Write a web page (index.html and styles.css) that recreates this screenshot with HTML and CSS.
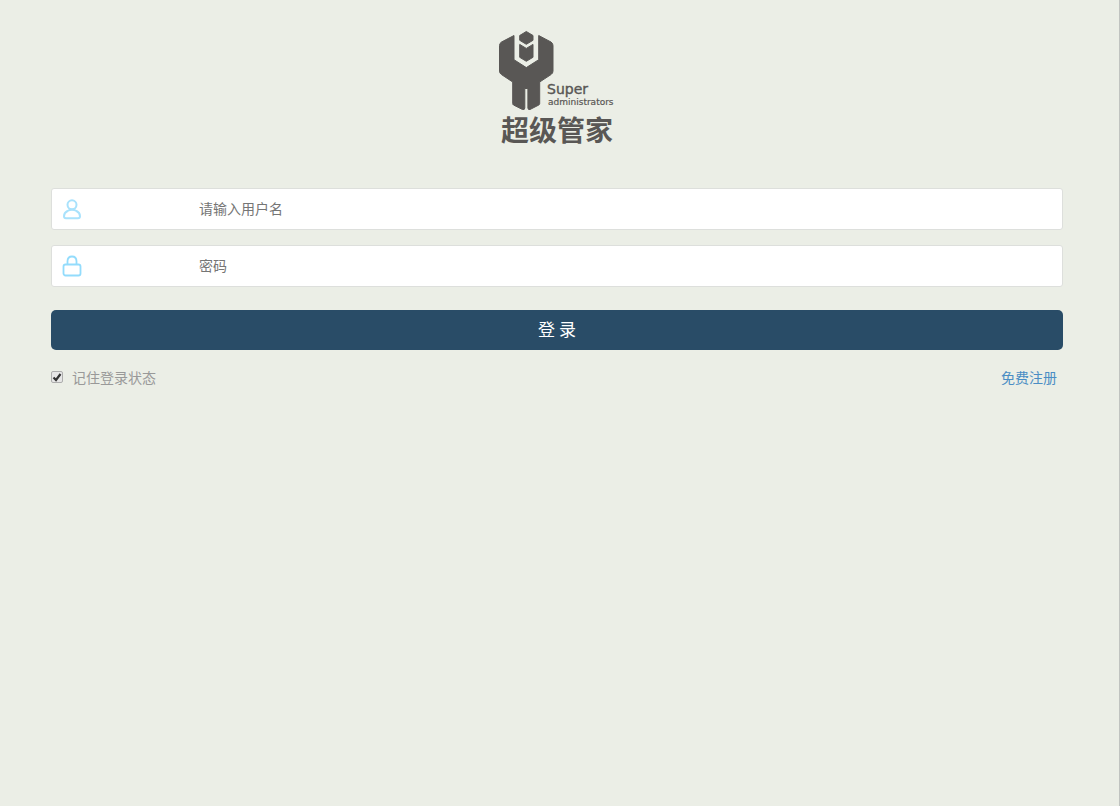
FILE: index.html
```html
<!DOCTYPE html>
<html lang="zh-CN">
<head>
  <meta charset="UTF-8">
  <meta name="viewport" content="width=device-width, initial-scale=1.0">
  <title>超级管家</title>
  <link rel="stylesheet" href="styles.css">
</head>
<body>
  <div class="page">
    <div class="logo">
      <svg width="120" height="120" viewBox="0 0 120 120" role="img" aria-label="超级管家">
        <g fill="#595755" stroke="#595755" stroke-width="1" stroke-linejoin="round">
          <path d="M17 7.5 L4.500 14 Q2.500 15.200 2.500 17.500 V43 Q2.500 45.300 4.500 46.600 L15.700 54 V75.500 Q15.700 76.500 16.500 77 L25.500 81.500 Q27.800 82 27.800 80 V60.500 H30.900 V80 Q31 82 33 81.500 L41.800 77 Q42.700 76.500 42.700 75.500 V54 L54 46.600 Q56 45.300 56 43 V17.500 Q56 15.200 54 14 L41.700 7.500 V31.700 L29.300 39.600 L17 31.700 Z"/>
          <path d="M29.300 3.500 L36 7.500 V12.300 L29.300 16.300 L22.700 12.300 V7.500 Z"/>
          <path d="M22.700 16.400 L29.300 20.400 L36 16.400 V29.300 L29.300 33.300 L22.700 29.300 Z"/>
        </g>
        <text class="logo-super" x="50" y="66">Super</text>
        <text class="logo-admin" x="51" y="77">administrators</text>
        <text class="logo-name" x="4" y="113">超级管家</text>
      </svg>
    </div>

    <form class="login-form">
      <div class="field">
        <label for="username" aria-label="用户名">
          <svg width="20" height="22" viewBox="0 0 20 22" fill="none" stroke="#a9e2fc" stroke-width="2">
            <circle cx="10" cy="6.800" r="4.500"/>
            <path d="M5.500 13 Q2 14.800 2 18.300 Q2 20.300 4 20.300 H16 Q18 20.300 18 18.300 Q18 14.800 14.500 13 Q12.500 11.800 10 11.800 Q7.500 11.800 5.500 13 Z"/>
          </svg>
        </label>
        <input type="text" id="username" placeholder="请输入用户名">
      </div>
      <div class="field">
        <label for="password" aria-label="密码">
          <svg width="20" height="22" viewBox="0 0 20 22" fill="none" stroke="#93dcfc" stroke-width="1.800">
            <path d="M5.500 9.500 V6.200 Q5.500 1.500 10 1.500 Q14.500 1.500 14.500 6.200 V9.500"/>
            <rect x="1.500" y="9.500" width="17" height="11" rx="2"/>
          </svg>
        </label>
        <input type="password" id="password" placeholder="密码">
      </div>
      <button type="submit" class="btn-login">登 录</button>
      <div class="options">
        <label class="remember">
          <input type="checkbox" checked>
          <span>记住登录状态</span>
        </label>
        <a href="#" class="register">免费注册</a>
      </div>
    </form>
  </div>
</body>
</html>
```
FILE: styles.css
```css
* {
  box-sizing: border-box;
}
body {
  margin: 0;
  font-family: "Noto Sans CJK SC", sans-serif;
  font-size: 14px;
  line-height: 20px;
  background: #ebeee6;
}
.page {
  min-height: 100vh;
  padding: 28px 56px 28px 51px;
  border-right: 1px solid #c0c3c0;
}
.logo {
  display: flex;
  justify-content: center;
  margin-bottom: 40px;
}
.logo text {
  fill: #595755;
}
.logo-super {
  font-family: "DejaVu Sans", sans-serif;
  font-size: 14px;
  stroke: #595755;
  stroke-width: 0.4px;
}
.logo-admin {
  font-family: "DejaVu Sans", sans-serif;
  font-size: 9px;
  stroke: #595755;
  stroke-width: 0.2px;
}
.logo-name {
  font-family: "Noto Sans CJK SC", sans-serif;
  font-size: 28px;
  font-weight: 700;
}
.field {
  display: flex;
  align-items: center;
  height: 42px;
  margin-bottom: 15px;
  background: #fff;
  border: 1px solid #dddfdc;
  border-radius: 3px;
}
.field label {
  display: flex;
  flex: none;
  width: 147px;
  padding-left: 10px;
}
.field input {
  flex: 1;
  min-width: 0;
  height: 40px;
  padding: 0 0 2px;
  border: none;
  outline: none;
  background: transparent;
  font-family: inherit;
  font-size: 14px;
}
.field input::placeholder {
  color: #757575;
}
.btn-login {
  display: block;
  width: 100%;
  height: 40px;
  margin-top: 23px;
  padding: 0 0 3px;
  border: none;
  border-radius: 5px;
  background: #294c67;
  color: #fff;
  font-family: inherit;
  font-size: 17px;
  cursor: pointer;
}
.options {
  display: flex;
  justify-content: space-between;
  margin-top: 17px;
  padding-right: 6px;
}
.remember {
  display: flex;
  align-items: center;
  gap: 9px;
  color: #999;
}
.remember input {
  appearance: none;
  width: 12px;
  height: 12px;
  margin: 0;
  border: 1px solid #adadad;
  border-radius: 2px;
  background: #e6e6e6;
}
.remember input:checked {
  background: #e6e6e6 url("data:image/svg+xml,%3Csvg xmlns='http://www.w3.org/2000/svg' viewBox='0 0 10 10'%3E%3Cpath d='M1.500 5.500 L4 8 L8.500 2' fill='none' stroke='%23333' stroke-width='2.200'/%3E%3C/svg%3E") center / 10px 10px no-repeat;
}
.register {
  color: #4a8dc4;
  text-decoration: none;
}
```
